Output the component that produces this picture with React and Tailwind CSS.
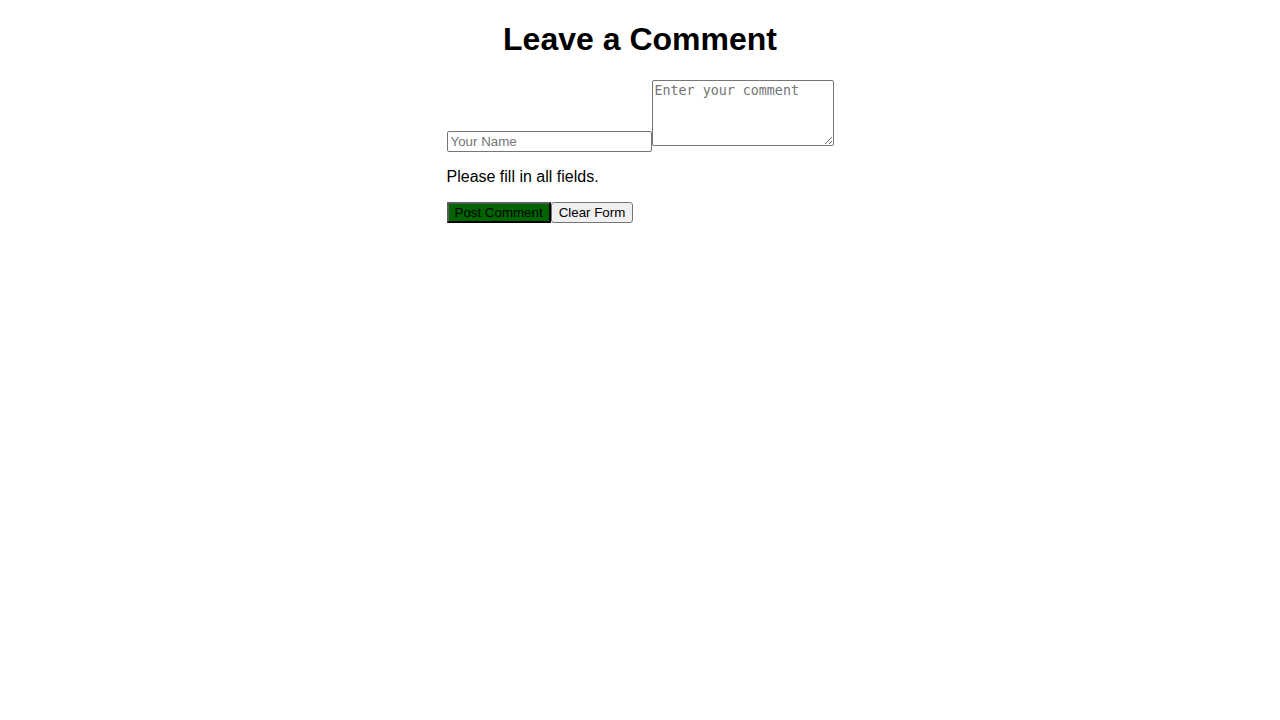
import React, { useState } from "react";

const App = () => {
  const [name, setName] = useState("");
  const [comment, setComment] = useState("");

  const clearForm = () => {
    setName("");
    setComment("");
  };

  return (
    <div className="min-h-screen bg-white text-black font-['Liberation_Sans',Arial,sans-serif]">
      <h1 className="text-center text-[32px] font-bold leading-[37px] pt-[21px] mb-[22px]">Leave a Comment</h1>
      <div className="mx-auto w-fit">
        {/* inputs row: textarea sits on the name field's text baseline */}
        <div className="flex items-end">
          <input
            type="text"
            value={name}
            onChange={(e) => setName(e.target.value)}
            placeholder="Your Name"
            className="block w-[205px] h-[21px] border border-[#767676] rounded-[2px] px-[3px] py-[1px] text-[13.33px] font-['Liberation_Sans',Arial,sans-serif] placeholder:text-[#757575] bg-white"
          />
          <textarea
            value={comment}
            onChange={(e) => setComment(e.target.value)}
            placeholder="Enter your comment"
            className="block w-[182px] h-[66px] mb-[6px] border border-[#767676] rounded-[2px] p-[2px] text-[13.33px] leading-[15px] font-['DejaVu_Sans_Mono',monospace] placeholder:text-[#757575] bg-white resize"
          />
        </div>
        <p className="my-4 text-base leading-[18px]">Please fill in all fields.</p>
        <div className="flex">
          <button
            type="button"
            className="h-[21px] whitespace-nowrap bg-[#006400] border-2 border-t-[#5c5c5c] border-l-[#5c5c5c] border-b-black border-r-black text-[13.33px] leading-[15px] px-[6px] text-black"
          >
            Post Comment
          </button>
          <button
            type="button"
            onClick={clearForm}
            className="h-[21px] whitespace-nowrap bg-[#efefef] border border-[#767676] rounded-[3px] text-[13.33px] leading-[15px] px-[7px] text-black"
          >
            Clear Form
          </button>
        </div>
      </div>
    </div>
  );
};

export default App;
